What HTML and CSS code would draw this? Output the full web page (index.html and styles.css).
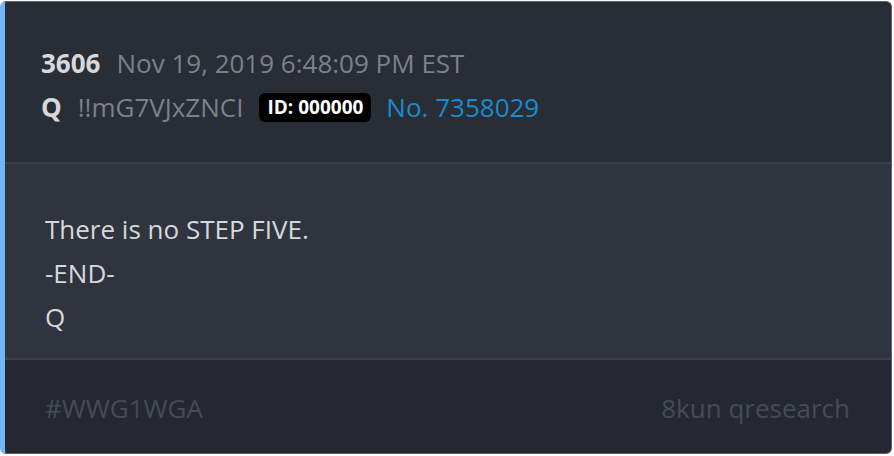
FILE: index.html
```html
<!DOCTYPE html>
<html>
<head>
<meta charset="utf-8">
<link rel="stylesheet" href="styles.css">
</head>
<body>
<div class="card">
  <div class="head">
    <div class="row">
      <span class="num">3606</span>
      <span class="date">Nov 19, 2019 6:48:09 PM EST</span>
    </div>
    <div class="row">
      <span class="name">Q</span>
      <span class="trip">!!mG7VJxZNCI</span>
      <span class="id">ID: 000000</span>
      <span class="no">No. 7358029</span>
    </div>
  </div>
  <div class="body">
    <p>There is no STEP FIVE.</p>
    <p>-END-</p>
    <p>Q</p>
  </div>
  <div class="foot">
    <span>#WWG1WGA</span>
    <span>8kun qresearch</span>
  </div>
</div>
</body>
</html>
```
FILE: styles.css
```css
html, body {
  margin: 0;
  padding: 0;
  background: #ffffff;
}
body {
  font-family: "Open Sans", sans-serif;
  padding-top: 1px;
}
.card {
  width: 886px;
  height: 451px;
  border: 1px solid #5b606b;
  border-left: 5px solid #74b4f9;
  border-radius: 6px;
  overflow: hidden;
  display: flex;
  flex-direction: column;
  background: #252830;
}
.head {
  background: #292d35;
  height: 162px;
  flex: none;
  padding: 39px 0 0 36px;
  box-sizing: border-box;
  border-bottom: 2px solid #3c414b;
}
.row {
  display: flex;
  align-items: center;
  height: 44px;
  font-size: 26px;
  white-space: nowrap;
}
.num, .name {
  font-weight: 700;
  color: #d7d8da;
  margin-right: 16px;
}
.date, .trip {
  color: #7c808b;
}
.trip {
  margin-right: 16px;
}
.id {
  background: #000;
  color: #fff;
  font-weight: 700;
  font-size: 19px;
  padding: 1px 8px 2px;
  border-radius: 6px;
  margin-right: 15px;
  line-height: 26px;
}
.no {
  color: #1a8bcc;
}
.body {
  background: #2f343e;
  height: 196px;
  flex: none;
  box-sizing: border-box;
  padding: 43px 0 0 40px;
  border-bottom: 2px solid #3c414b;
}
.body p {
  margin: 0;
  font-size: 26px;
  line-height: 44px;
  color: #d7d8da;
}
.foot {
  flex: 1;
  display: flex;
  justify-content: space-between;
  align-items: center;
  padding: 2px 41px 0 40px;
  font-size: 26px;
  color: #474b56;
}
```
